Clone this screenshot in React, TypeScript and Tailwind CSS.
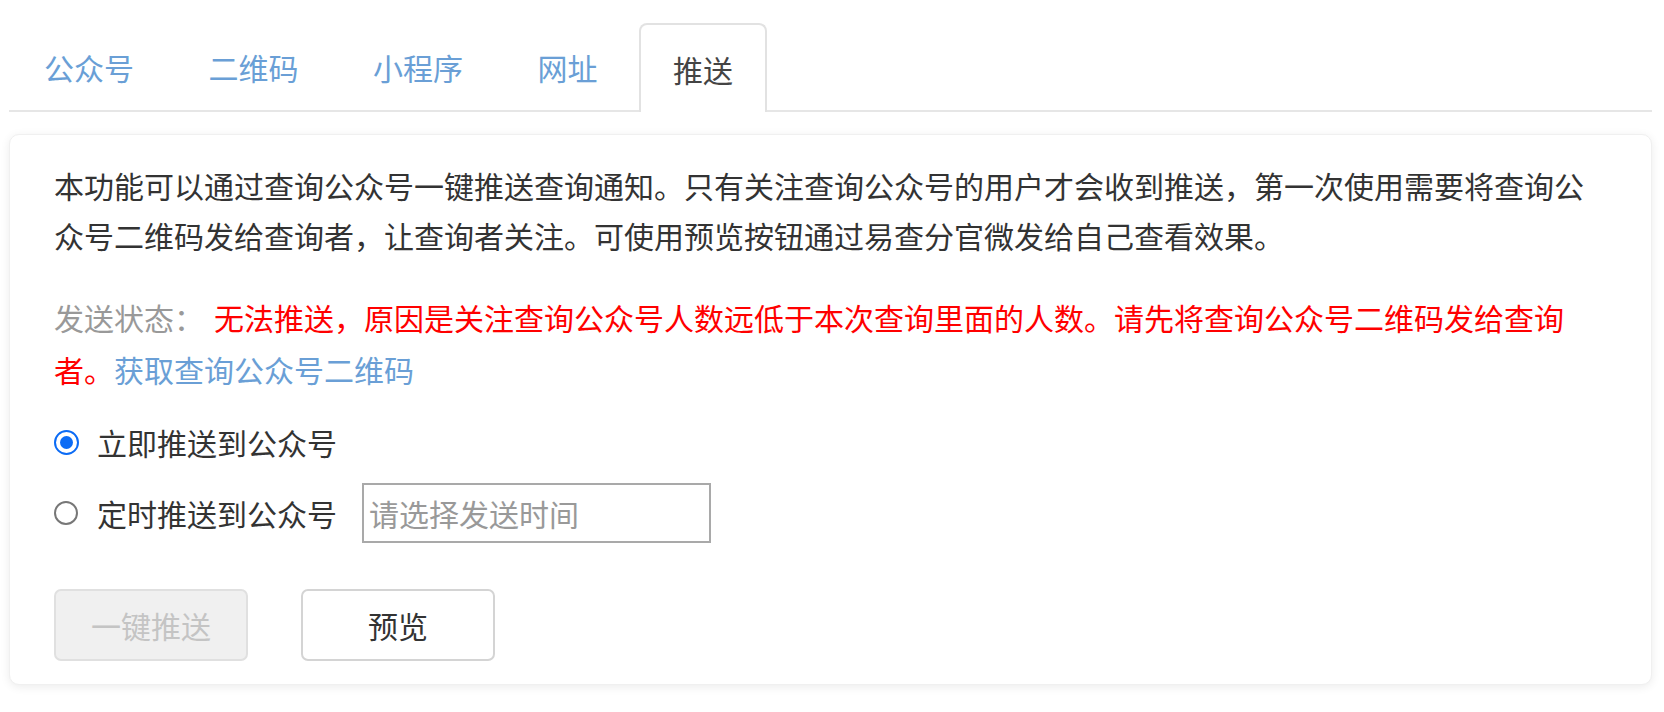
import React from 'react';

const tabs = ['公众号', '二维码', '小程序', '网址', '推送'];

export default function App() {
  const active = 4;

  return (
    <div className="min-h-[712px] w-full bg-white font-['Noto_Sans_CJK_SC','Noto_Sans',sans-serif] text-[#333]">
      <div className="pl-[9px] pr-[12px] pt-[23px]">
        {/* Tabs */}
        <div className="flex items-end border-b-2 border-[#e6e6e6] pl-[2px]">
          {tabs.map((t, i) => (
            <div
              key={t}
              className={
                i === active
                  ? '-mb-[2px] mr-[8.5px] flex h-[89px] items-center rounded-t-[8px] border-2 border-b-0 border-[#e2e2e2] bg-white px-[32px] pt-[2px] text-[30px] text-[#444]'
                  : 'mr-[8.5px] flex h-[87px] items-center border-2 border-transparent px-[31px] pt-[2px] text-[30px] text-[#6a9fd6]'
              }
            >
              {t}
            </div>
          ))}
        </div>

        {/* Panel */}
        <div className="mt-[22px] rounded-[10px] border border-[#f0f0f0] bg-white px-[44px] pb-[23px] pt-[25px] shadow-[0_2px_10px_rgba(0,0,0,0.08)]">
          <p className="text-[30px] leading-[50px] text-[#333]">
            本功能可以通过查询公众号一键推送查询通知。只有关注查询公众号的用户才会收到推送，第一次使用需要将查询公众号二维码发给查询者，让查询者关注。可使用预览按钮通过易查分官微发给自己查看效果。
          </p>

          <p className="mt-[31px] text-[30px] leading-[52px]">
            <span className="mr-[10px] text-[#999]">发送状态：</span>
            <span className="text-[#ff0000]">
              无法推送，原因是关注查询公众号人数远低于本次查询里面的人数。请先将查询公众号二维码发给查询者。
            </span>
            <a className="cursor-pointer text-[#6a9fd6]">获取查询公众号二维码</a>
          </p>

          {/* Options */}
          <div className="mt-[22px] flex h-[50px] items-center">
            <span className="flex h-[25px] w-[25px] items-center justify-center rounded-full border-[2.5px] border-[#0b6bf5] bg-white">
              <span className="h-[13px] w-[13px] rounded-full bg-[#0b6bf5]" />
            </span>
            <span className="ml-[18px] text-[30px] text-[#333]">立即推送到公众号</span>
          </div>

          <div className="mt-[16px] flex h-[60px] items-center">
            <span className="h-[24px] w-[24px] rounded-full border-2 border-[#777] bg-white" />
            <span className="ml-[19px] text-[30px] text-[#333]">定时推送到公众号</span>
            <input
              className="ml-[25px] h-[60px] w-[349px] border-2 border-[#a9a9a9] px-[5px] text-[30px] text-[#333] outline-none placeholder:text-[#999]"
              placeholder="请选择发送时间"
            />
          </div>

          {/* Actions */}
          <div className="mt-[46px] flex gap-[53px]">
            <button
              disabled
              className="h-[72px] w-[194px] rounded-[7px] border-2 border-[#e0e0e0] bg-[#f0f0f0] text-[30px] text-[#c4c4c4]"
            >
              一键推送
            </button>
            <button className="h-[72px] w-[194px] rounded-[7px] border-2 border-[#d4d4d4] bg-white text-[30px] text-[#333]">
              预览
            </button>
          </div>
        </div>
      </div>
    </div>
  );
}
